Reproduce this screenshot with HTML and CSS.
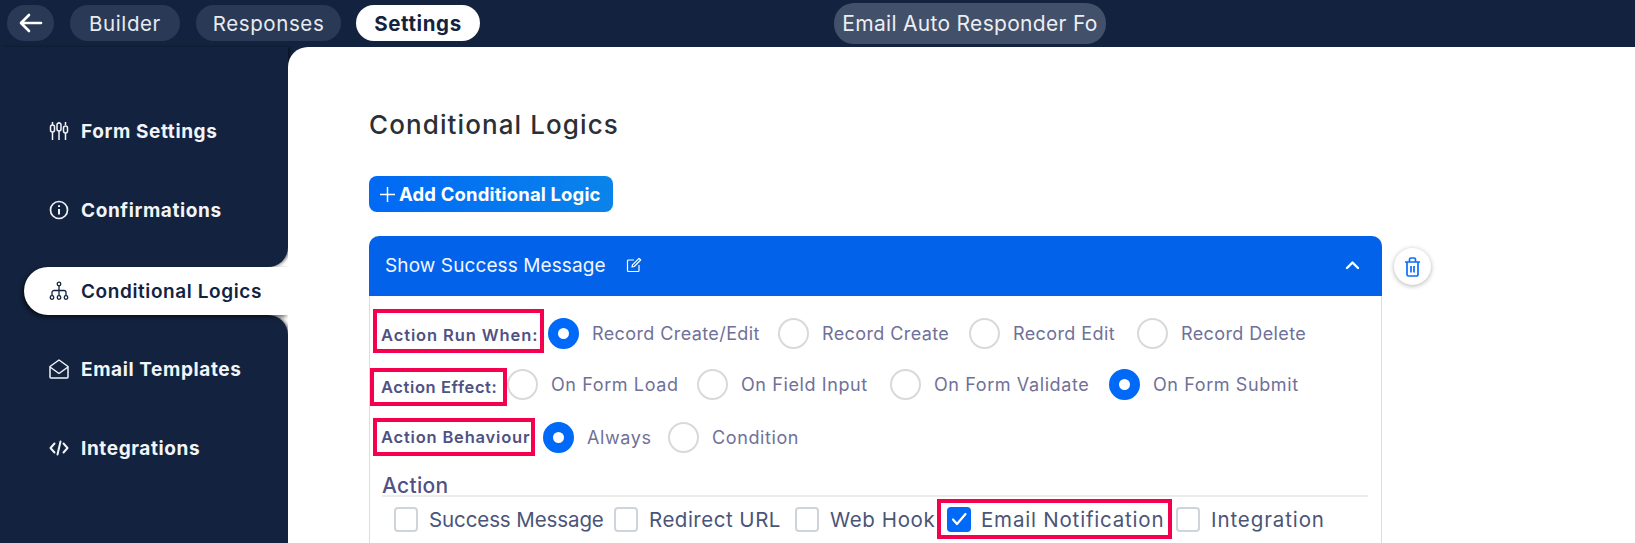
FILE: index.html
```html
<!DOCTYPE html>
<html lang="en">
<head>
    <meta charset="UTF-8">
    <meta name="viewport" content="width=device-width, initial-scale=1.0">
    <title>Conditional Logics</title>
    <link rel="stylesheet" href="styles.css">
</head>
<body>
    <header class="topbar">
        <button class="pill back">
            <svg width="26" height="22" viewBox="0 0 26 22" fill="none" stroke="#fff" stroke-width="2.6" stroke-linecap="round" stroke-linejoin="round"><path d="M23 11H3M11 3l-8 8 8 8"/></svg>
        </button>
        <button class="pill builder">Builder</button>
        <button class="pill responses">Responses</button>
        <button class="pill settings">Settings</button>
        <div class="form-name">Email Auto Responder Fo</div>
    </header>

    <div class="layout">
        <aside class="sidebar">
            <div class="nav-block nav-top">
                <a class="nav-item">
                    <svg class="nav-icon" viewBox="0 0 20 20" fill="none" stroke="currentColor" stroke-width="1.500"><path d="M3.500 1v3M3.500 11v8M10 1v1M10 10v9M16.500 1v3M16.500 12v7"/><rect x="1.500" y="4" width="4" height="7" rx="2"/><rect x="8" y="2" width="4" height="8" rx="2"/><rect x="14.500" y="5" width="4" height="7" rx="2"/></svg>
                    Form Settings
                </a>
                <a class="nav-item">
                    <svg class="nav-icon" viewBox="0 0 20 20" fill="none" stroke="currentColor" stroke-width="1.700"><circle cx="10" cy="10" r="8.500"/><path d="M10 9v5.500" stroke-width="2"/><path d="M10 5.200v1.800" stroke-width="2"/></svg>
                    Confirmations
                </a>
            </div>
            <div class="active-row">
                <a class="nav-item active">
                    <svg class="nav-icon" viewBox="0 0 20 20" fill="none" stroke="currentColor" stroke-width="1.300"><circle cx="10" cy="3" r="1.800"/><circle cx="3" cy="16.500" r="1.800"/><circle cx="10" cy="16.500" r="1.800"/><circle cx="17" cy="16.500" r="1.800"/><path d="M10 5v9.500M3 14.500V11.500a2 2 0 0 1 2-2h10a2 2 0 0 1 2 2v3"/></svg>
                    Conditional Logics
                </a>
            </div>
            <div class="nav-block nav-bottom">
                <a class="nav-item">
                    <svg class="nav-icon" viewBox="0 0 20 20" fill="none" stroke="currentColor" stroke-width="1.500" stroke-linejoin="round"><path d="M1 7.500 10 1l9 6.500V18a1 1 0 0 1-1 1H2a1 1 0 0 1-1-1z"/><path d="m1 8 9 6.500L19 8"/></svg>
                    Email Templates
                </a>
                <a class="nav-item">
                    <svg class="nav-icon" viewBox="0 0 20 20" fill="none" stroke="currentColor" stroke-width="2" stroke-linecap="round" stroke-linejoin="round"><path d="M5.500 5.500 1.500 10l4 4.500M14.500 5.500l4 4.500-4 4.500M11.500 3.500l-3 13"/></svg>
                    Integrations
                </a>
            </div>
        </aside>

        <main class="content">
            <h1 class="page-title">Conditional Logics</h1>
            <button class="add-btn">
                <svg width="17" height="17" viewBox="0 0 17 17" stroke="#fff" stroke-width="1.500"><path d="M8.500 1v15M1 8.500h15"/></svg>
                Add Conditional Logic
            </button>

            <div class="logic-wrap">
                <section class="card">
                    <div class="card-head">
                        <span>Show Success Message</span>
                        <svg class="edit-icon" width="16" height="16" viewBox="0 0 16 16" fill="none" stroke="#fff" stroke-width="1.200" stroke-linejoin="round"><path d="M8 3H2.500a1 1 0 0 0-1 1v9.500a1 1 0 0 0 1 1H12a1 1 0 0 0 1-1V8"/><path d="M6.500 7.800 13 1.300l1.700 1.700-6.500 6.500-2.200.5z"/></svg>
                        <svg class="chevron" width="15" height="10" viewBox="0 0 15 10" fill="none" stroke="#fff" stroke-width="2.400" stroke-linecap="round" stroke-linejoin="round"><path d="m2 8 5.500-5.500L13 8"/></svg>
                    </div>
                    <div class="card-body">
                        <div class="row row-when">
                            <div class="flag flag-when">Action Run When:</div>
                            <label class="opt"><i class="radio on"></i>Record Create/Edit</label>
                            <label class="opt"><i class="radio"></i>Record Create</label>
                            <label class="opt"><i class="radio"></i>Record Edit</label>
                            <label class="opt"><i class="radio"></i>Record Delete</label>
                        </div>
                        <div class="row row-effect">
                            <div class="flag flag-effect">Action Effect:</div>
                            <label class="opt"><i class="radio"></i>On Form Load</label>
                            <label class="opt"><i class="radio"></i>On Field Input</label>
                            <label class="opt"><i class="radio"></i>On Form Validate</label>
                            <label class="opt"><i class="radio on"></i>On Form Submit</label>
                        </div>
                        <div class="row row-behaviour">
                            <div class="flag flag-behaviour">Action Behaviour</div>
                            <label class="opt"><i class="radio on"></i>Always</label>
                            <label class="opt"><i class="radio"></i>Condition</label>
                        </div>
                        <div class="action-title">Action</div>
                        <div class="checks">
                            <label class="check c1"><i class="box"></i>Success Message</label>
                            <label class="check c2"><i class="box"></i>Redirect URL</label>
                            <label class="check c3"><i class="box"></i>Web Hook</label>
                            <label class="check c4 marked">
                                <i class="box on"><svg width="20" height="20" viewBox="0 0 20 20" fill="none" stroke="#fff" stroke-width="2.200" stroke-linecap="round" stroke-linejoin="round"><path d="m4 10.500 4 4.500 8.500-10"/></svg></i>Email Notification
                            </label>
                            <label class="check c5"><i class="box"></i>Integration</label>
                        </div>
                    </div>
                </section>
                <button class="trash">
                    <svg width="17" height="20" viewBox="0 0 17 20" fill="none" stroke="#0d6efd" stroke-width="1.700" stroke-linejoin="round"><path d="M1 5h15M3 5v12.500a1.500 1.500 0 0 0 1.500 1.500h8a1.500 1.500 0 0 0 1.500-1.500V5M5.500 5V2.500a1.500 1.500 0 0 1 1.500-1.500h3a1.500 1.500 0 0 1 1.500 1.500V5M7 9v6.500M10 9v6.500"/></svg>
                </button>
            </div>
        </main>
    </div>
</body>
</html>
```

FILE: styles.css
```css
* {
    box-sizing: border-box;
}

html, body {
    height: 100%;
}

body {
    margin: 0;
    overflow: hidden;
    background-color: #13233f;
    font-family: Inter, "Open Sans", sans-serif;
}

button {
    font-family: inherit;
    border: none;
    padding: 0;
}

.topbar {
    height: 47px;
    display: flex;
    align-items: flex-start;
    padding: 5px 0 0 7px;
    position: relative;
}

.pill {
    height: 36px;
    border-radius: 18px;
    background-color: #2a3a56;
    color: #e8ebf0;
    font-size: 20.500px;
    letter-spacing: 0.6px;
    display: flex;
    align-items: center;
    justify-content: center;
}

.back {
    width: 47px;
}

.builder {
    width: 110px;
    margin-left: 16px;
}

.responses {
    width: 145px;
    margin-left: 16px;
}

.settings {
    width: 124px;
    margin-left: 15px;
    background-color: #fff;
    color: #13233f;
    font-weight: 700;
}

.form-name {
    width: 272px;
    height: 41px;
    margin: -2px 0 0 354px;
    border-radius: 20px;
    background-color: #42506a;
    color: #eceef2;
    font-size: 21px;
    letter-spacing: 0.3px;
    line-height: 41px;
    text-align: center;
    white-space: nowrap;
    overflow: hidden;
}

.layout {
    display: flex;
    height: calc(100% - 47px);
}

.sidebar {
    width: 288px;
    flex: none;
    display: flex;
    flex-direction: column;
    background-color: #fff;
}

.nav-block {
    background-color: #13233f;
    padding-left: 49px;
    box-shadow: 2px 0 3px rgba(0, 0, 0, 0.45);
}

.nav-top {
    height: 220px;
    padding-top: 66px;
    border-bottom-right-radius: 20px;
}

.nav-bottom {
    flex: 1;
    padding-top: 36px;
    border-top-right-radius: 20px;
}

.active-row {
    background-color: #13233f;
    padding-left: 24px;
    height: 48px;
    position: relative;
}

.nav-item {
    display: flex;
    align-items: center;
    gap: 12px;
    height: 36px;
    margin-bottom: 43px;
    color: #f2f4f7;
    font-size: 19px;
    letter-spacing: 0.6px;
    font-weight: 700;
    white-space: nowrap;
}

.nav-icon {
    width: 20px;
    height: 20px;
    flex: none;
}

.nav-item.active {
    height: 48px;
    margin: 0;
    padding-left: 25px;
    background-color: #fff;
    color: #13233f;
    font-weight: 600;
    border-radius: 24px 0 0 24px;
    box-shadow: -2px 2px 4px rgba(0, 0, 0, 0.6);
}

.content {
    flex: 1;
    background-color: #fff;
    border-top-left-radius: 20px;
    padding: 62px 0 0 81px;
    position: relative;
}

.page-title {
    margin: 0;
    font-size: 26px;
    letter-spacing: 1.100px;
    line-height: 32px;
    font-weight: 500;
    color: #2b2f36;
}

.add-btn {
    display: flex;
    align-items: center;
    gap: 3px;
    width: 244px;
    height: 36px;
    margin-top: 35px;
    padding-left: 10px;
    border-radius: 8px;
    background: linear-gradient(90deg, #0069f5, #0a84ea);
    color: #fff;
    font-size: 18.500px;
    letter-spacing: 0.15px;
    font-weight: 700;
    white-space: nowrap;
}

.logic-wrap {
    display: flex;
    align-items: flex-start;
    margin-top: 24px;
}

.card {
    width: 1013px;
    height: 307px;
    border: 1px solid #dcdde2;
    border-top: none;
    border-bottom: none;
    border-radius: 10px 10px 0 0;
}

.card-head {
    height: 60px;
    margin: 0 -1px;
    padding: 0 22px 2px 16px;
    display: flex;
    align-items: center;
    background-color: #0263ea;
    color: #f2f6ff;
    font-size: 19px;
    letter-spacing: 0.1px;
    border-radius: 10px 10px 0 0;
}

.edit-icon {
    margin-left: 20px;
}

.chevron {
    margin-left: auto;
}

.card-body {
    padding: 13px 13px 0 12px;
}

.row {
    display: grid;
    align-items: center;
}

.row-when {
    height: 44px;
    margin-left: -9px;
    grid-template-columns: 171px 230px 191px 168px auto;
}

.row-effect {
    height: 38px;
    margin: 15px 0 0 -12px;
    grid-template-columns: 137px 190px 193px 219px auto;
}

.row-behaviour {
    height: 38px;
    margin: 12px 0 0 -9px;
    grid-template-columns: 162px 125px auto;
}

.flag {
    height: 100%;
    border: 4px solid #f5004f;
    color: #4f5282;
    font-size: 16.500px;
    letter-spacing: 0.9px;
    font-weight: 600;
    white-space: nowrap;
    display: flex;
    align-items: center;
}

.flag-when {
    padding: 8px 0 0 4px;
}

.flag-effect {
    padding-left: 7px;
    letter-spacing: 0.6px;
}

.flag-behaviour {
    padding-left: 4px;
    letter-spacing: 0.8px;
}

.opt {
    display: flex;
    align-items: center;
    gap: 13px;
    color: #6f7199;
    font-size: 18px;
    letter-spacing: 0.4px;
    white-space: nowrap;
}

.row-when .opt {
    margin: 5px 0 0 4px;
}

.row-effect .opt {
    margin-top: -5px;
    letter-spacing: 0.6px;
}

.row-behaviour .opt {
    margin-left: 8px;
    letter-spacing: 0.6px;
}

.radio {
    width: 31px;
    height: 31px;
    flex: none;
    border-radius: 50%;
    border: 2px solid #d9d9d9;
    background-color: #fff;
}

.radio.on {
    border: 10px solid #0069f8;
}

.action-title {
    margin-top: 15px;
    height: 26px;
    line-height: 30px;
    color: #4f5282;
    font-size: 21px;
    letter-spacing: 0.3px;
    font-weight: 500;
    border-bottom: 2px solid #ececec;
}

.checks {
    display: flex;
    align-items: center;
    height: 40px;
    margin-top: 2px;
}

.check {
    display: flex;
    align-items: center;
    gap: 11px;
    color: #4a5578;
    font-size: 20.500px;
    white-space: nowrap;
    flex: none;
}

.box {
    width: 24px;
    height: 25px;
    flex: none;
    border: 2px solid #ced4da;
    border-radius: 4px;
    background-color: #fff;
}

.box.on {
    border: none;
    background-color: #0069f8;
    display: flex;
    align-items: center;
    justify-content: center;
}

.c1 {
    width: 220px;
    margin-left: 12px;
    letter-spacing: -0.1px;
}

.c2 {
    width: 181px;
    letter-spacing: 0.5px;
}

.c3 {
    width: 142px;
    letter-spacing: 0.6px;
}

.c4 {
    width: 235px;
    height: 40px;
    padding-left: 6px;
    border: 4px solid #f5004f;
    gap: 10px;
    letter-spacing: 0.8px;
}

.c5 {
    margin-left: 4px;
    letter-spacing: 0.9px;
}

.trash {
    width: 37px;
    height: 37px;
    margin: 12px 0 0 12px;
    border-radius: 50%;
    background-color: #fff;
    box-shadow: 0 1px 5px rgba(0, 0, 0, 0.3);
    display: flex;
    align-items: center;
    justify-content: center;
}
```
